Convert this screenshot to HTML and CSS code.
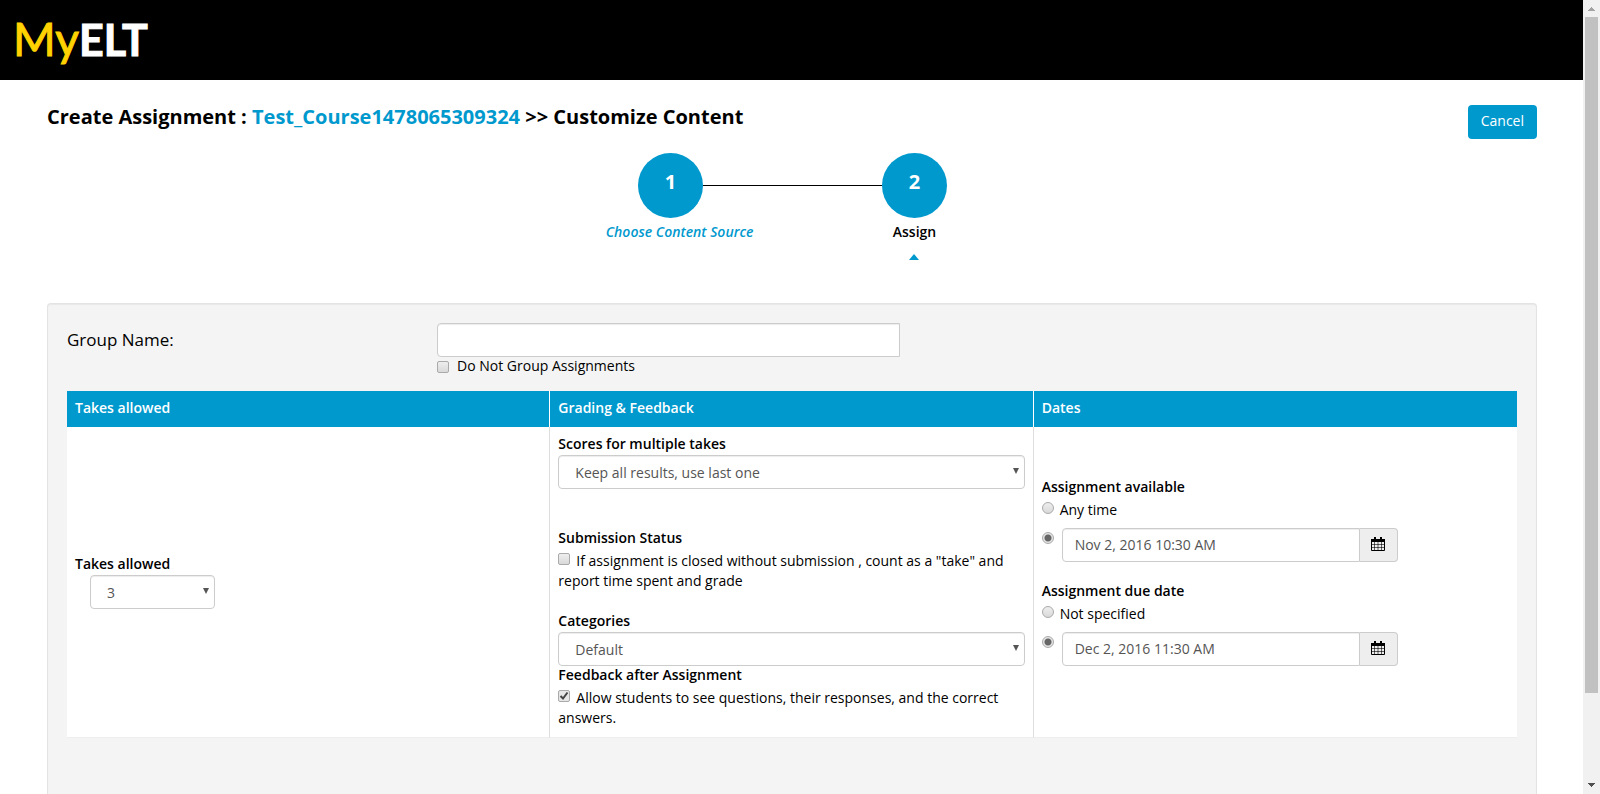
FILE: index.html
```html
<!DOCTYPE html>
<html lang="en">
<head>
<meta charset="utf-8">
<title>MyELT - Create Assignment</title>
<link rel="stylesheet" href="styles.css">
</head>
<body>
<div class="page">
  <header class="topbar"><a class="logo" href="#"><span class="logo-my">My</span><span class="logo-elt">ELT</span></a></header>
  <main class="content">
    <div class="title-row">
      <h1 class="title">Create Assignment : <a href="#">Test_Course1478065309324</a> &gt;&gt; Customize Content</h1>
      <button class="cancel" type="button">Cancel</button>
    </div>
    <ol class="steps">
      <li class="step step-source"><span class="circle">1</span><a class="step-label" href="#">Choose Content Source</a></li>
      <li class="step-line" aria-hidden="true"></li>
      <li class="step"><span class="circle">2</span><span class="step-label">Assign</span><span class="caret"></span></li>
    </ol>
    <form class="panel">
      <div class="group-row">
        <label class="group-label" for="group">Group Name:</label>
        <div class="group-field">
          <input class="field group-input" id="group" type="text">
          <div class="no-group"><input class="tick" id="nogroup" type="checkbox"><label for="nogroup">Do Not Group Assignments</label></div>
        </div>
      </div>
      <table class="options">
        <thead><tr><th>Takes allowed</th><th>Grading &amp; Feedback</th><th>Dates</th></tr></thead>
        <tbody><tr>
          <td>
            <label class="heading" for="takes">Takes allowed</label>
            <div class="select takes"><select class="field" id="takes"><option>3</option></select></div>
          </td>
          <td>
            <label class="heading" for="scores">Scores for multiple takes</label>
            <div class="select scores"><select class="field" id="scores"><option>Keep all results, use last one</option></select></div>
            <strong class="heading">Submission Status</strong>
            <p class="choice submission"><input class="tick" id="closed" type="checkbox"><label for="closed">If assignment is closed without submission , count as a "take" and report time spent and grade</label></p>
            <label class="heading" for="categories">Categories</label>
            <div class="select"><select class="field" id="categories"><option>Default</option></select></div>
            <strong class="heading">Feedback after Assignment</strong>
            <p class="choice"><input class="tick" id="allow" type="checkbox" checked><label for="allow">Allow students to see questions, their responses, and the correct answers.</label></p>
          </td>
          <td>
            <fieldset class="dates">
              <legend class="heading">Assignment available</legend>
              <p class="choice"><input class="tick radio" id="anytime" type="radio" name="available"><label for="anytime">Any time</label></p>
              <div class="date-row">
                <input class="tick radio" type="radio" name="available" aria-label="Available from date" checked>
                <div class="date-group"><input class="field" type="text" aria-label="Available date" value="Nov 2, 2016 10:30 AM"><button class="addon" type="button" aria-label="Open calendar"><svg class="calendar" viewBox="0 0 14 14"><path d="M0 2h14v3H0z"/><path d="M3 0h2v3H3zM9 0h2v3H9z"/><path d="M.5 4v9.5h13V4" fill="none" stroke="#000"/><path d="M.5 7.500h13M.5 10.500h13M3.500 5v8.500M7 5v8.500M10.500 5v8.500" fill="none" stroke="#000" stroke-opacity=".6"/></svg></button></div>
              </div>
            </fieldset>
            <fieldset class="dates">
              <legend class="heading">Assignment due date</legend>
              <p class="choice"><input class="tick radio" id="notspec" type="radio" name="due"><label for="notspec">Not specified</label></p>
              <div class="date-row">
                <input class="tick radio" type="radio" name="due" aria-label="Due on date" checked>
                <div class="date-group"><input class="field" type="text" aria-label="Due date" value="Dec 2, 2016 11:30 AM"><button class="addon" type="button" aria-label="Open calendar"><svg class="calendar" viewBox="0 0 14 14"><path d="M0 2h14v3H0z"/><path d="M3 0h2v3H3zM9 0h2v3H9z"/><path d="M.5 4v9.5h13V4" fill="none" stroke="#000"/><path d="M.5 7.500h13M.5 10.500h13M3.500 5v8.500M7 5v8.500M10.500 5v8.500" fill="none" stroke="#000" stroke-opacity=".6"/></svg></button></div>
              </div>
            </fieldset>
          </td>
        </tr></tbody>
      </table>
    </form>
  </main>
</div>
<div class="scrollbar" aria-hidden="true">
  <svg class="arrow" viewBox="0 0 17 17"><path d="M5 11h7v-1h-1V9h-1V8H9V7H8v1H7v1H6v1H5z" fill="#a3a3a3"/></svg>
  <div class="track"><div class="thumb"></div></div>
  <svg class="arrow" viewBox="0 0 17 17"><path d="M5 6h7v1h-1v1h-1v1H9v1H8V9H7V8H6V7H5z" fill="#505050"/></svg>
</div>
</body>
</html>
```
FILE: styles.css
```css
* { box-sizing: border-box; }
body {
  display: flex;
  height: 100vh;
  margin: 0;
  overflow: hidden;
  background: #fff;
  color: #000;
  font: 14px/20px "Open Sans", "Noto Sans", sans-serif;
}
a { color: #0099ce; text-decoration: none; }
input, select, button { margin: 0; font: inherit; }

.page { display: flex; flex: 1; flex-direction: column; min-width: 0; }
.topbar { flex: none; height: 80px; padding: 9px 13px; background: #000; }
.logo { display: inline-flex; align-items: baseline; font: 46px/60px Lato, sans-serif; }
.logo-my { color: #ffd200; -webkit-text-stroke: 1px #ffd200; }
.logo-elt { color: #fff; font-weight: 700; font-size: 43px; -webkit-text-stroke: 1px #fff; }

.content { display: flex; flex: 1; flex-direction: column; min-height: 0; padding: 25px 46px 0 47px; }
.title-row { display: flex; justify-content: space-between; align-items: flex-start; height: 48px; }
.title { margin: 0; font-size: 20px; font-weight: 700; line-height: 24px; }
.cancel {
  height: 34px;
  padding: 0 13px 2px;
  border: 0;
  border-radius: 4px;
  background: #0099ce;
  color: #fff;
  font-weight: 500;
}

.steps {
  display: flex;
  justify-content: center;
  height: 150px;
  margin: 0;
  padding: 0 0 0 1px;
  list-style: none;
}
.step { display: flex; flex-direction: column; align-items: center; width: 65px; white-space: nowrap; }
.circle {
  width: 65px;
  height: 65px;
  border-radius: 50%;
  background: #0099ce;
  color: #fff;
  font-size: 20px;
  font-weight: 700;
  line-height: 58px;
  text-align: center;
}
.step-label { margin-top: 4px; font-weight: 600; }
.step-source .step-label { padding-left: 18px; font-style: italic; }
.step-line { width: 179px; height: 33px; border-bottom: 1px solid #000; }
.caret {
  margin: 12px 2px 0 0;
  border: 5px solid transparent;
  border-top: 0;
  border-bottom: 6px solid #0099ce;
}

.panel {
  flex: 1 0 auto;
  padding: 19px;
  border: 1px solid #e3e3e3;
  border-bottom: 0;
  border-radius: 4px 4px 0 0;
  background: #f4f4f4;
  box-shadow: inset 0 1px 1px rgba(0, 0, 0, .05);
}
.group-row { display: flex; height: 68px; }
.group-label { width: 370px; font-size: 17px; line-height: 34px; }
.group-field { width: 463px; }
.no-group { display: flex; gap: 8px; line-height: 18px; }
.no-group .tick { margin-top: 4px; }

.field {
  display: block;
  width: 100%;
  height: 34px;
  padding: 0 12px 2px;
  border: 1px solid #ccc;
  border-radius: 4px;
  background: #fff;
  box-shadow: inset 0 1px 1px rgba(0, 0, 0, .075);
  color: #555;
}
.group-input { border-radius: 4px 0 0 4px; }
.select { position: relative; }
.select .field { padding: 2px 16px 0; appearance: none; }
.select::after {
  position: absolute;
  top: 13px;
  right: 6px;
  border: 3px solid transparent;
  border-top: 6px solid #555;
  border-bottom: 0;
  content: "";
}
.takes { width: 125px; margin-left: 15px; }
.scores { margin-bottom: 40px; }

.options { width: 100%; border-collapse: separate; border-spacing: 0; table-layout: fixed; }
.options th {
  height: 36px;
  padding: 0 8px 2px;
  border-right: 1px solid #fff;
  background: #0099ce;
  color: #fff;
  font-weight: 600;
  text-align: left;
}
.options td {
  padding: 8px;
  border-right: 1px solid #ddd;
  border-bottom: 1px solid #eee;
  background: #fff;
  vertical-align: middle;
}
.options th:last-child, .options td:last-child { border-right: 0; }
.heading { display: block; padding: 0 0 2px; font-weight: 600; line-height: 18px; }
.choice { margin: 2px 0 1px; }
.choice .tick { margin-right: 6px; vertical-align: 1px; }
.choice.submission { margin-bottom: 21px; }

.tick {
  flex: none;
  width: 12px;
  height: 12px;
  border: 1px solid #aaa;
  border-radius: 2px;
  background: linear-gradient(#eee, #d9d9d9);
  appearance: none;
}
#allow {
  background: url("data:image/svg+xml,%3Csvg xmlns='http://www.w3.org/2000/svg' viewBox='0 0 10 10'%3E%3Cpath d='M1.5 5l2.5 2.5L8.500 1.500' fill='none' stroke='%23444' stroke-width='2'/%3E%3C/svg%3E") #e6e6e6;
}
.radio { border-radius: 50%; }
.radio:checked { background: radial-gradient(circle, #666 0 3px, #e4e4e4 4px); }

.dates { min-width: 0; margin: 0 0 20px; padding: 0; border: 0; }
.date-row { display: flex; gap: 8px; margin-top: 8px; }
.date-row .tick { margin-top: 4px; }
.date-group { display: flex; width: 336px; }
.date-group .field { flex: 1; width: auto; min-width: 0; border-radius: 4px 0 0 4px; }
.addon {
  display: flex;
  align-items: center;
  justify-content: center;
  width: 38px;
  padding: 0 0 2px;
  border: 1px solid #ccc;
  border-left: 0;
  border-radius: 0 4px 4px 0;
  background: #eee;
}
.calendar { width: 14px; height: 14px; }

.scrollbar { display: flex; flex: none; flex-direction: column; width: 17px; background: #f1f1f1; }
.arrow { width: 17px; height: 17px; }
.track { flex: 1; padding: 0 2px; }
.thumb { height: 89%; background: #c1c1c1; }
```
